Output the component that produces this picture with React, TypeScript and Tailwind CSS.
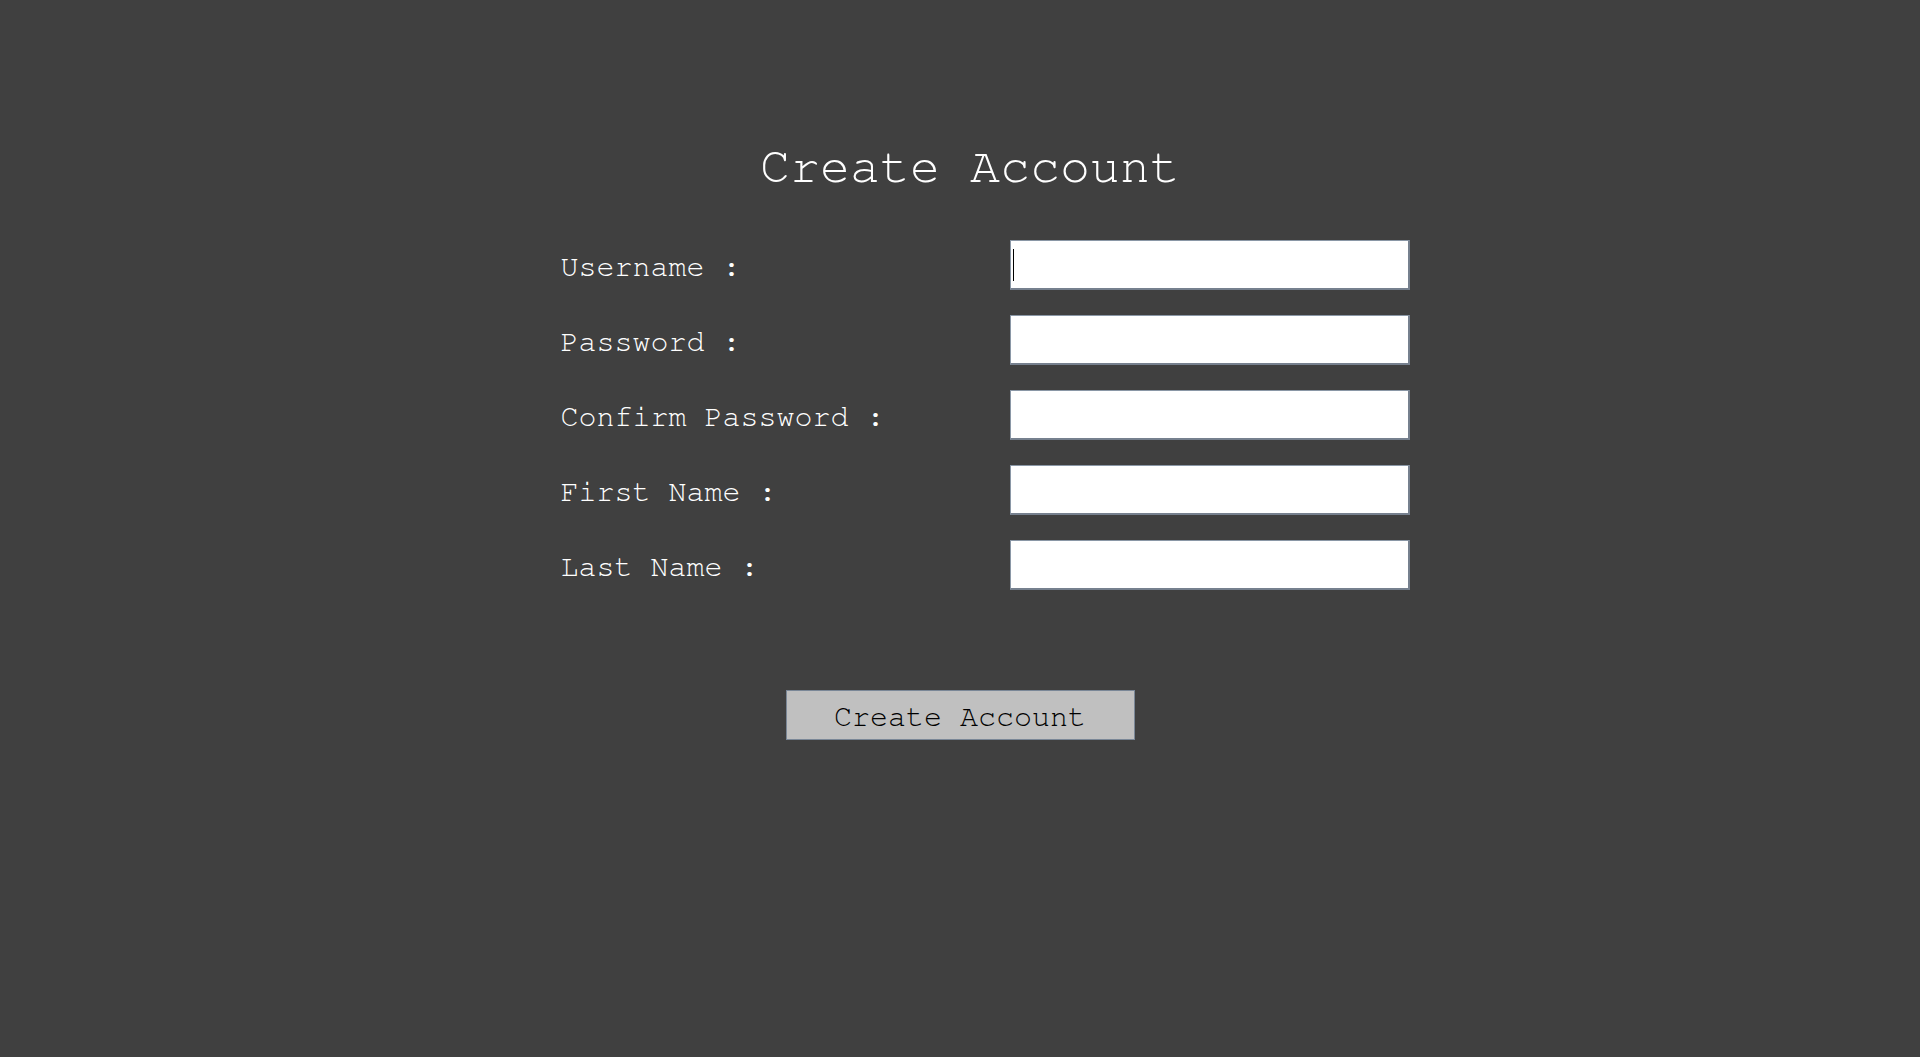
import React from "react";

const labels = ["Username :", "Password :", "Confirm Password :", "First Name :", "Last Name :"];

export default function App() {
  return (
    <div className="min-h-[1057px] w-full bg-[#404040] font-['Nimbus_Mono_PS','FreeMono','Courier','Courier_New','Liberation_Mono',monospace]">
      <div className="flex flex-col items-center pt-[142px]">
        <h1 className="ml-[20px] text-[50px] leading-[50px] font-normal text-white">Create Account</h1>
        <div className="mt-[48px] ml-[50px] flex flex-col gap-[25px]">
          {labels.map((l, i) => (
            <div key={l} className="flex items-center">
              <label className="w-[449px] text-[30px] leading-[30px] text-white pt-[3px]">{l}</label>
              <div className="relative">
                <input
                  type={i === 1 || i === 2 ? "password" : "text"}
                  className="block h-[50px] w-[400px] bg-white border-t border-l border-[#8a97a6] border-b-2 border-r-2 border-b-[#76808e] border-r-[#76808e] outline-none px-1 text-[20px]"
                />
                {i === 0 && <span className="absolute left-[3px] top-[9px] h-[32px] w-px bg-black" />}
              </div>
            </div>
          ))}
        </div>
        <button className="mt-[100px] h-[50px] w-[349px] bg-[#c0c0c0] border border-[#7a8797] text-[30px] leading-[30px] pt-[3px] text-black">
          Create Account
        </button>
      </div>
    </div>
  );
}
